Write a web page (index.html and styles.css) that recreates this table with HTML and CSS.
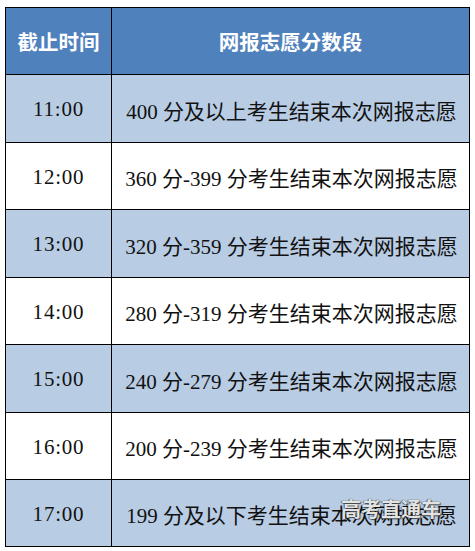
FILE: index.html
```html
<!DOCTYPE html>
<html lang="zh-CN">
<head>
<meta charset="utf-8">
<title>网报志愿截止时间</title>
<link rel="stylesheet" href="styles.css">
</head>
<body>
<div class="sheet">
  <div class="grid">
    <div class="cell head">截止时间</div>
    <div class="cell head">网报志愿分数段</div>

    <div class="cell shade time">11:00</div>
    <div class="cell shade desc">400 分及以上考生结束本次网报志愿</div>

    <div class="cell time">12:00</div>
    <div class="cell desc">360 分-399 分考生结束本次网报志愿</div>

    <div class="cell shade time">13:00</div>
    <div class="cell shade desc">320 分-359 分考生结束本次网报志愿</div>

    <div class="cell time">14:00</div>
    <div class="cell desc">280 分-319 分考生结束本次网报志愿</div>

    <div class="cell shade time">15:00</div>
    <div class="cell shade desc">240 分-279 分考生结束本次网报志愿</div>

    <div class="cell time">16:00</div>
    <div class="cell desc">200 分-239 分考生结束本次网报志愿</div>

    <div class="cell shade time">17:00</div>
    <div class="cell shade desc">199 分及以下考生结束本次网报志愿</div>
  </div>
  <span class="watermark">高考直通车</span>
</div>
</body>
</html>
```

FILE: styles.css
```css
html, body {
  margin: 0;
  padding: 0;
  background: #ffffff;
}

.sheet {
  position: relative;
  margin: 7px 0 0 5px;
  width: 465px;
}

.grid {
  display: grid;
  grid-template-columns: 106px 358px;
  grid-template-rows: 67px 68px 67px 68px 67px 68px 67px 67px;
  border-top: 1px solid #000;
  border-left: 1px solid #000;
  width: 464px;
}

.cell {
  display: flex;
  align-items: center;
  justify-content: center;
  border-right: 1px solid #000;
  border-bottom: 1px solid #000;
  white-space: nowrap;
  font-family: "Liberation Serif", "Noto Sans CJK SC", serif;
  font-size: 21px;
  color: #111111;
  background: #ffffff;
}

.head {
  background: #4f81bd;
  color: #ffffff;
  font-family: "Noto Sans CJK SC", sans-serif;
  font-weight: 700;
  font-size: 20.5px;
}

.shade {
  background: #b8cce4;
}

.time {
  letter-spacing: 0.8px;
  padding-top: 2px;
}

.desc {
  padding-left: 2px;
  padding-top: 2px;
}

.watermark {
  position: absolute;
  left: 336px;
  top: 487px;
  font-family: "Noto Sans CJK SC", sans-serif;
  font-weight: 700;
  font-size: 20px;
  color: rgba(255, 255, 255, 0.9);
  text-shadow: 0 0 1px #222, 1px 1px 1px rgba(0, 0, 0, 0.6), -1px 0 1px rgba(0, 0, 0, 0.35);
}
```
